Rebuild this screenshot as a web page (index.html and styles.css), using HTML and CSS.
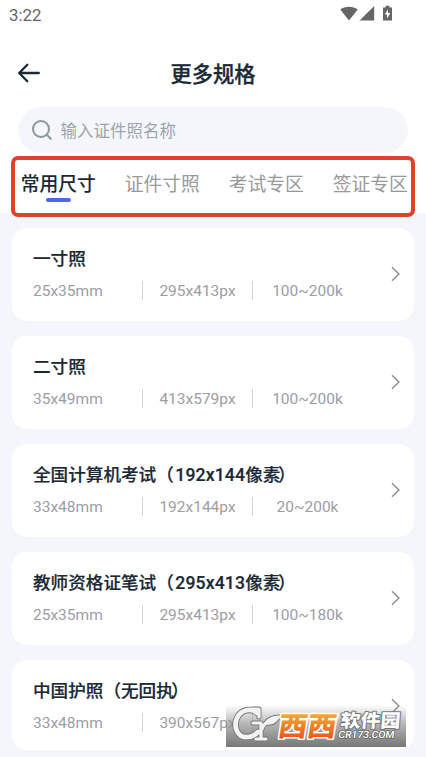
FILE: index.html
```
<!DOCTYPE html>
<html lang="zh-CN">
<head>
<meta charset="utf-8">
<title>更多规格</title>
<link rel="stylesheet" href="styles.css">
</head>
<body>
<div class="top">
  <div class="status">
    <span class="time">3:22</span>
    <svg class="status-icons" width="54" height="18" viewBox="0 0 54 18">
      <path d="M0.3 4.6C5 .8 13 .8 17.7 4.6L9 15.4z"/>
      <path d="M34.2 1v14.4H19.6z"/>
      <path d="M43 2.5h2.6V.8h3.8v1.7H52v12.9h-9z"/>
      <path class="bolt" d="M48 4.3l-3.2 5.2h2.2v4l3.4-5.4H48z"/>
    </svg>
  </div>
  <header class="header">
    <svg class="back" width="24" height="22" viewBox="0 0 24 22"><path d="M21.8 11H2.5M10.3 2.7L2.2 11l8.1 8.3"/></svg>
    <h1>更多规格</h1>
  </header>
  <div class="search">
    <svg width="20" height="20" viewBox="0 0 20 20"><circle cx="9" cy="9" r="8"/><path d="M14.8 14.8l4 4"/></svg>
    <span>输入证件照名称</span>
  </div>
  <nav class="tabs">
    <span class="tab active">常用尺寸</span>
    <span class="tab">证件寸照</span>
    <span class="tab">考试专区</span>
    <span class="tab">签证专区</span>
  </nav>
</div>
<main class="list">
  <article class="card">
    <div class="info"><h2>一寸照</h2><div class="specs"><span>25x35mm</span><span>295x413px</span><span>100~200k</span></div></div>
    <svg class="chevron" width="10" height="16" viewBox="0 0 10 16"><path d="M1 1.2L8 8l-7 6.8"/></svg>
  </article>
  <article class="card">
    <div class="info"><h2>二寸照</h2><div class="specs"><span>35x49mm</span><span>413x579px</span><span>100~200k</span></div></div>
    <svg class="chevron" width="10" height="16" viewBox="0 0 10 16"><path d="M1 1.2L8 8l-7 6.8"/></svg>
  </article>
  <article class="card">
    <div class="info"><h2>全国计算机考试（<span class="size">192x144</span>像<span class="tight">素</span>）</h2><div class="specs"><span>33x48mm</span><span>192x144px</span><span>20~200k</span></div></div>
    <svg class="chevron" width="10" height="16" viewBox="0 0 10 16"><path d="M1 1.2L8 8l-7 6.8"/></svg>
  </article>
  <article class="card">
    <div class="info"><h2>教师资格证笔试（<span class="size">295x413</span>像<span class="tight">素</span>）</h2><div class="specs"><span>25x35mm</span><span>295x413px</span><span>100~180k</span></div></div>
    <svg class="chevron" width="10" height="16" viewBox="0 0 10 16"><path d="M1 1.2L8 8l-7 6.8"/></svg>
  </article>
  <article class="card last">
    <div class="info"><h2>中国护照（无回<span class="tight">执</span>）</h2><div class="specs"><span>33x48mm</span><span>390x567px</span><span></span></div></div>
    <svg class="chevron" width="10" height="16" viewBox="0 0 10 16"><path d="M1 1.2L8 8l-7 6.8"/></svg>
  </article>
</main>
<div class="watermark">
  <svg width="180" height="42" viewBox="0 0 180 42">
    <defs>
      <linearGradient id="orange" x1="0" y1="0" x2="0" y2="1"><stop offset=".2" stop-color="#f5b233"/><stop offset=".9" stop-color="#e5521c"/></linearGradient>
    </defs>
    <g class="logo-edge"><path class="big" d="M31 8C26 3 15 4 11 13 7 22 12 33 21 32c5 0 8-2 11-5"/><path d="M26 4h7v8M27 18h8v16M30 34h10M36 24c1-4 4-6 7-7"/><path class="leaf" d="M38 19c3-6 9-8 16-8-3 6-7 9-14 8z"/></g>
    <g class="logo-fill"><path class="big" d="M31 8C26 3 15 4 11 13 7 22 12 33 21 32c5 0 8-2 11-5"/><path d="M26 4h7v8M27 18h8v16M30 34h10M36 24c1-4 4-6 7-7"/><path class="leaf" d="M38 19c3-6 9-8 16-8-3 6-7 9-14 8z"/></g>
    <text class="brand" transform="translate(51 31) skewX(-9)" textLength="58" lengthAdjust="spacingAndGlyphs">西西</text>
    <text class="site" transform="translate(114 22) skewX(-5)" textLength="60" lengthAdjust="spacingAndGlyphs">软件园</text>
    <text class="domain" transform="translate(112 33) skewX(-8)" textLength="56" lengthAdjust="spacingAndGlyphs">CR173.COM</text>
  </svg>
</div>
<div class="highlight"></div>
</body>
</html>
```
FILE: styles.css
```
* { box-sizing: border-box; }
body {
  position: relative;
  margin: 0;
  width: 426px;
  height: 757px;
  overflow: hidden;
  background: #f5f6fb;
  color: #1a2936;
  font-family: Roboto, "Noto Sans CJK SC", sans-serif;
}
svg { display: block; flex: none; }
.top { height: 213px; background: #fff; }
.status {
  display: flex;
  justify-content: space-between;
  height: 46px;
  padding: 5px 32px 0 9px;
}
.time { font-size: 16.8px; line-height: 20px; color: #666; }
.status-icons { fill: #666; }
.status-icons .bolt { fill: #fff; }
.header {
  display: grid;
  grid-template-columns: 60px 1fr 60px;
  align-items: center;
  height: 56px;
}
.back {
  margin: -2px 0 0 16.5px;
  fill: none;
  stroke: #1a2936;
  stroke-width: 2.3;
  stroke-linecap: round;
  stroke-linejoin: round;
}
h1 { margin: 2px 0 0; font-size: 21.3px; line-height: 30px; font-weight: 500; text-align: center; -webkit-text-stroke: .3px; }
.search {
  display: flex;
  align-items: center;
  gap: 8.5px;
  height: 46px;
  margin: 5px 18px 0;
  padding-left: 14px;
  border-radius: 23px;
  background: #f5f6fb;
  color: #9ca5ad;
  font-size: 16.5px;
}
.search svg { fill: none; stroke: #8b979f; stroke-width: 2; stroke-linecap: round; }
.tabs {
  display: flex;
  gap: 28.8px;
  padding: 18px 0 0 20.7px;
}
.tab {
  display: flex;
  flex-direction: column;
  align-items: center;
  flex: none;
  width: 75.2px;
  color: #999;
  font-size: 18.8px;
  line-height: 28px;
}
.active { color: #1a2936; font-weight: 500; }
.active::after {
  content: "";
  width: 25px;
  height: 4px;
  margin-top: -1px;
  border-radius: 2px;
  background: #4c68e5;
}
.list {
  display: flex;
  flex-direction: column;
  gap: 14.5px;
  padding: 14.5px 12px 0;
}
.card {
  display: flex;
  justify-content: space-between;
  height: 93.5px;
  padding: 18px 13px 0 21px;
  border-radius: 15px;
  background: #fff;
}
.last { height: 90px; }
h2 { margin: 0; font-size: 17.6px; line-height: 26px; font-weight: 500; white-space: nowrap; -webkit-text-stroke: .2px; }
.size { margin-left: 1.5px; letter-spacing: .15px; }
.tight { letter-spacing: -2.5px; }
.specs {
  display: grid;
  grid-template-columns: 109px 110px 110px;
  align-items: center;
  height: 19px;
  margin-top: 9px;
  color: #9d9da5;
  font-size: 15.5px;
  line-height: 19px;
}
.specs span { height: 19px; padding-top: 1px; }
.specs span + span { border-left: 1px solid #d4d4da; text-align: center; }
.chevron { margin-top: 20.5px; fill: none; stroke: #888; stroke-width: 1.3; }
.watermark {
  position: absolute;
  left: 226px;
  top: 705px;
  width: 180px;
  height: 42px;
  background: linear-gradient(#90909000, #909090aa 45%, #777);
}
.logo-edge, .logo-fill { fill: none; stroke-linejoin: round; stroke-linecap: round; }
.logo-edge { stroke: #777; stroke-width: 5; }
.logo-fill { stroke: #f3f3f3; stroke-width: 3.2; }
.logo-edge .big { stroke-width: 6.5; }
.logo-fill .big { stroke-width: 4.7; }
.logo-edge .leaf { stroke-width: 3; }
.logo-fill .leaf { fill: #f3f3f3; stroke-width: 1; }
.brand, .site, .domain { font-family: "Noto Sans CJK SC", sans-serif; font-weight: 900; paint-order: stroke; stroke-linejoin: round; }
.brand { font-size: 27px; fill: url(#orange); stroke: #fff; stroke-width: 3px; }
.site { font-size: 18px; fill: #fff; stroke: #777; stroke-width: 2px; }
.domain { font-family: Roboto, sans-serif; font-size: 10px; font-weight: 500; fill: #fff; stroke: #666; stroke-width: 1.5px; }
.highlight {
  position: absolute;
  left: 11px;
  top: 156px;
  width: 404px;
  height: 61px;
  border: 4px solid #dc432d;
  border-radius: 7px;
}
```
